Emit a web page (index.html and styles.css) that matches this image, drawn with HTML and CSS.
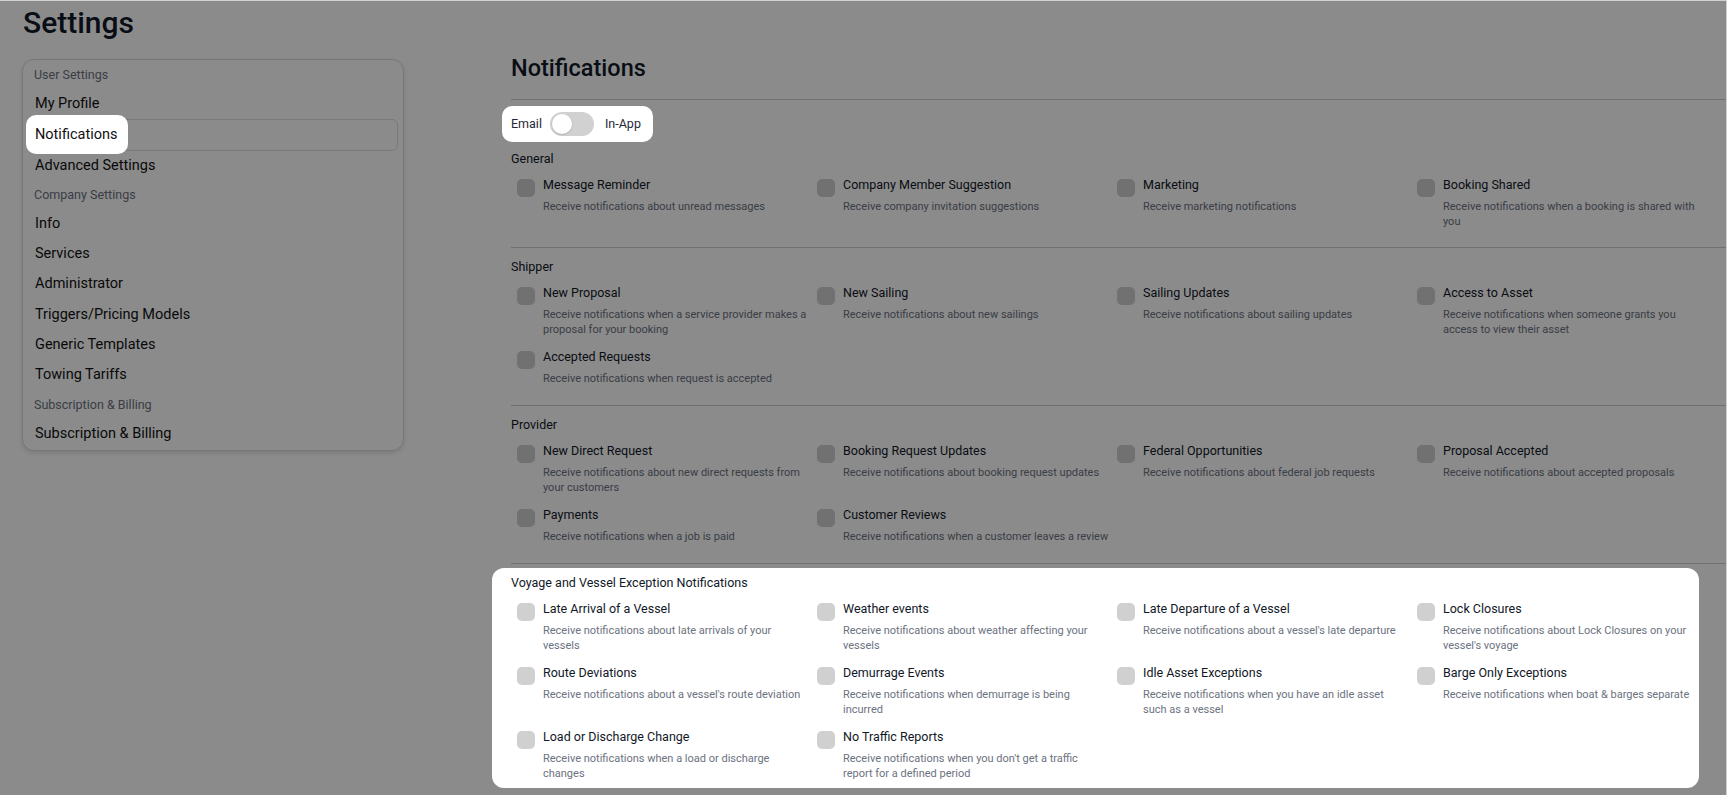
FILE: index.html
```html
<!DOCTYPE html>
<html lang="en">
<head>
<meta charset="utf-8">
<title>Settings</title>
<link rel="stylesheet" href="styles.css">
</head>
<body>
<div class="page">
  <h1 class="page-title">Settings</h1>
  <div class="layout">
    <nav class="sidebar">
      <div class="nav-label">User Settings</div>
      <a class="nav-item">My Profile</a>
      <a class="nav-item active"><span class="spot">Notifications</span></a>
      <a class="nav-item">Advanced Settings</a>
      <div class="nav-label">Company Settings</div>
      <a class="nav-item">Info</a>
      <a class="nav-item">Services</a>
      <a class="nav-item">Administrator</a>
      <a class="nav-item">Triggers/Pricing Models</a>
      <a class="nav-item">Generic Templates</a>
      <a class="nav-item">Towing Tariffs</a>
      <div class="nav-label">Subscription &amp; Billing</div>
      <a class="nav-item">Subscription &amp; Billing</a>
    </nav>

    <main class="main">
      <h2 class="main-title">Notifications</h2>

      <div class="mode">
        <span class="mode-label">Email</span>
        <span class="switch"><span class="knob"></span></span>
        <span class="mode-label">In-App</span>
      </div>

      <section class="group">
        <div class="group-title">General</div>
        <div class="grid">
          <div class="pref"><span class="check"></span><div class="pref-text"><div class="pref-title">Message Reminder</div><div class="pref-desc">Receive notifications about unread messages</div></div></div>
          <div class="pref"><span class="check"></span><div class="pref-text"><div class="pref-title">Company Member Suggestion</div><div class="pref-desc">Receive company invitation suggestions</div></div></div>
          <div class="pref"><span class="check"></span><div class="pref-text"><div class="pref-title">Marketing</div><div class="pref-desc">Receive marketing notifications</div></div></div>
          <div class="pref"><span class="check"></span><div class="pref-text"><div class="pref-title">Booking Shared</div><div class="pref-desc">Receive notifications when a booking is shared with you</div></div></div>
        </div>
      </section>

      <section class="group">
        <div class="group-title">Shipper</div>
        <div class="grid">
          <div class="pref"><span class="check"></span><div class="pref-text"><div class="pref-title">New Proposal</div><div class="pref-desc">Receive notifications when a service provider makes a proposal for your booking</div></div></div>
          <div class="pref"><span class="check"></span><div class="pref-text"><div class="pref-title">New Sailing</div><div class="pref-desc">Receive notifications about new sailings</div></div></div>
          <div class="pref"><span class="check"></span><div class="pref-text"><div class="pref-title">Sailing Updates</div><div class="pref-desc">Receive notifications about sailing updates</div></div></div>
          <div class="pref"><span class="check"></span><div class="pref-text"><div class="pref-title">Access to Asset</div><div class="pref-desc">Receive notifications when someone grants you access to view their asset</div></div></div>
          <div class="pref"><span class="check"></span><div class="pref-text"><div class="pref-title">Accepted Requests</div><div class="pref-desc">Receive notifications when request is accepted</div></div></div>
        </div>
      </section>

      <section class="group">
        <div class="group-title">Provider</div>
        <div class="grid">
          <div class="pref"><span class="check"></span><div class="pref-text"><div class="pref-title">New Direct Request</div><div class="pref-desc">Receive notifications about new direct requests from your customers</div></div></div>
          <div class="pref"><span class="check"></span><div class="pref-text"><div class="pref-title">Booking Request Updates</div><div class="pref-desc">Receive notifications about booking request updates</div></div></div>
          <div class="pref"><span class="check"></span><div class="pref-text"><div class="pref-title">Federal Opportunities</div><div class="pref-desc">Receive notifications about federal job requests</div></div></div>
          <div class="pref"><span class="check"></span><div class="pref-text"><div class="pref-title">Proposal Accepted</div><div class="pref-desc">Receive notifications about accepted proposals</div></div></div>
          <div class="pref"><span class="check"></span><div class="pref-text"><div class="pref-title">Payments</div><div class="pref-desc">Receive notifications when a job is paid</div></div></div>
          <div class="pref"><span class="check"></span><div class="pref-text"><div class="pref-title">Customer Reviews</div><div class="pref-desc">Receive notifications when a customer leaves a review</div></div></div>
        </div>
      </section>

      <section class="group group-spot">
        <div class="group-title">Voyage and Vessel Exception Notifications</div>
        <div class="grid">
          <div class="pref"><span class="check"></span><div class="pref-text"><div class="pref-title">Late Arrival of a Vessel</div><div class="pref-desc">Receive notifications about late arrivals of your vessels</div></div></div>
          <div class="pref"><span class="check"></span><div class="pref-text"><div class="pref-title">Weather events</div><div class="pref-desc">Receive notifications about weather affecting your vessels</div></div></div>
          <div class="pref"><span class="check"></span><div class="pref-text"><div class="pref-title">Late Departure of a Vessel</div><div class="pref-desc">Receive notifications about a vessel's late departure</div></div></div>
          <div class="pref"><span class="check"></span><div class="pref-text"><div class="pref-title">Lock Closures</div><div class="pref-desc">Receive notifications about Lock Closures on your vessel's voyage</div></div></div>
          <div class="pref"><span class="check"></span><div class="pref-text"><div class="pref-title">Route Deviations</div><div class="pref-desc">Receive notifications about a vessel's route deviation</div></div></div>
          <div class="pref"><span class="check"></span><div class="pref-text"><div class="pref-title">Demurrage Events</div><div class="pref-desc">Receive notifications when demurrage is being incurred</div></div></div>
          <div class="pref"><span class="check"></span><div class="pref-text"><div class="pref-title">Idle Asset Exceptions</div><div class="pref-desc">Receive notifications when you have an idle asset such as a vessel</div></div></div>
          <div class="pref"><span class="check"></span><div class="pref-text"><div class="pref-title">Barge Only Exceptions</div><div class="pref-desc">Receive notifications when boat &amp; barges separate</div></div></div>
          <div class="pref"><span class="check"></span><div class="pref-text"><div class="pref-title">Load or Discharge Change</div><div class="pref-desc">Receive notifications when a load or discharge changes</div></div></div>
          <div class="pref"><span class="check"></span><div class="pref-text"><div class="pref-title">No Traffic Reports</div><div class="pref-desc">Receive notifications when you don't get a traffic report for a defined period</div></div></div>
        </div>
      </section>
    </main>
  </div>
</div>
<div class="tour-overlay"></div>
</body>
</html>
```

FILE: styles.css
```css
* { box-sizing: border-box; }

html, body {
  margin: 0;
  padding: 0;
  background: #ffffff;
}

body {
  font-family: Roboto, "Liberation Sans", Arial, sans-serif;
  color: #111827;
}

.page {
  padding: 5px 0 0 22px;
}

.page-title {
  margin: 0 0 10px 0;
  font-size: 30px;
  line-height: 36px;
  font-weight: 500;
  color: #111827;
  padding-left: 1px;
}

.layout {
  display: flex;
  align-items: flex-start;
  gap: 107px;
}

/* Sidebar */
.sidebar {
  width: 382px;
  flex: 0 0 382px;
  margin-top: 8px;
  padding: 1px 5px 1px;
  border: 1px solid #dcdcdc;
  border-radius: 12px;
  background: #ffffff;
  box-shadow: 0 2px 4px rgba(0, 0, 0, 0.12);
  display: flex;
  flex-direction: column;
}

.nav-label {
  height: 28px;
  line-height: 28px;
  padding-left: 6px;
  font-size: 12.5px;
  color: #6b7280;
}

.nav-item {
  display: block;
  line-height: 28.3px;
  padding: 0 6px;
  border: 1px solid transparent;
  border-radius: 6px;
  font-size: 14.5px;
  color: #111111;
}

.nav-item.active {
  border-color: #dedede;
}

.spot {
  position: relative;
  z-index: 20;
  display: inline-block;
  padding: 5px 11px 5px 9px;
  margin: -5px -11px -5px -9px;
  line-height: 29px;
  background: #ffffff;
  border-radius: 10px;
}

/* Main */
.main {
  flex: 1 1 auto;
  min-width: 0;
}

.main-title {
  margin: 0;
  padding-top: 1px;
  padding-bottom: 15px;
  font-size: 23.5px;
  line-height: 32px;
  font-weight: 500;
  color: #111827;
  border-bottom: 1px solid #cbcbcb;
}

.mode {
  position: relative;
  z-index: 20;
  display: flex;
  align-items: center;
  width: fit-content;
  margin: 6px 0 7px -9px;
  padding: 6px 12px 6px 9px;
  background: #ffffff;
  border-radius: 10px;
}

.mode-label {
  font-size: 12.5px;
  line-height: 20px;
  color: #1f2937;
}

.switch {
  display: flex;
  align-items: center;
  width: 44px;
  height: 24px;
  margin: 0 11px 0 8px;
  padding: 2px;
  border-radius: 12px;
  background: #d1d1d1;
}

.knob {
  width: 20px;
  height: 20px;
  border-radius: 50%;
  background: #ffffff;
  box-shadow: 0 1px 2px rgba(0, 0, 0, 0.15);
}

.group {
  padding: 9px 0 19px;
  border-bottom: 1px solid #cbcbcb;
}

.mode + .group {
  padding-top: 0;
  padding-bottom: 18px;
}

.group-title {
  font-size: 12.5px;
  line-height: 20px;
  color: #111827;
  margin-bottom: 6px;
}

.grid {
  display: grid;
  grid-template-columns: repeat(4, 300px);
  row-gap: 10px;
  align-items: start;
}

.pref {
  display: flex;
  gap: 8px;
  padding-left: 6px;
}

.check {
  flex: 0 0 18px;
  width: 18px;
  height: 18px;
  margin-top: 4px;
  border-radius: 5px;
  background: #d0d0d0;
}

.pref-text {
  max-width: 266px;
}

.pref-title {
  font-size: 12.5px;
  line-height: 20px;
  color: #111827;
}

.pref-desc {
  margin-top: 4px;
  font-size: 11px;
  line-height: 15px;
  color: #6b7280;
}

/* Highlighted section of the product tour */
.group-spot {
  position: relative;
  z-index: 20;
  margin: 4px 28px 0 -19px;
  padding: 5px 0 7px 19px;
  border-bottom: 0;
  background: #ffffff;
  border-radius: 12px;
}

/* Tour dimming layer */
.tour-overlay {
  position: fixed;
  inset: 0;
  z-index: 10;
  background: rgba(0, 0, 0, 0.455);
  border-top: 1px solid #d0d0d0;
  border-right: 1px solid #d0d0d0;
}
```
